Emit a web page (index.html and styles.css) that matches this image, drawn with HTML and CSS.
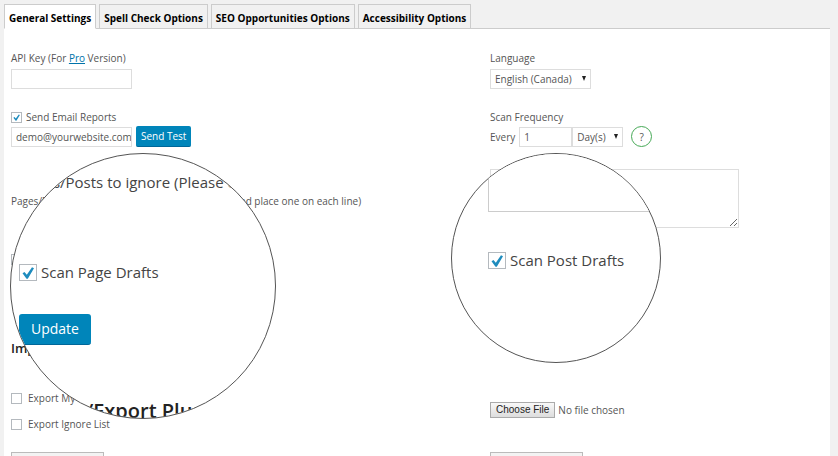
FILE: index.html
```
<!DOCTYPE html>
<html lang="en">
<head>
<meta charset="utf-8">
<title>General Settings</title>
<link rel="stylesheet" href="styles.css">
</head>
<body>
<nav class="tabs">
  <button class="tab tab-active" type="button">General Settings</button>
  <button class="tab" type="button">Spell Check Options</button>
  <button class="tab" type="button">SEO Opportunities Options</button>
  <button class="tab" type="button">Accessibility Options</button>
</nav>
<main class="panel">
  <form class="settings">
    <div class="field">
      <label for="api">API Key (For <a href="#">Pro</a> Version)</label>
      <input class="box" id="api" type="text">
    </div>
    <div class="field">
      <label for="lang">Language</label>
      <span class="pick pick-lang"><select class="box" id="lang"><option>English (Canada)</option></select></span>
    </div>
    <div class="field field-tight">
      <label class="check"><input type="checkbox" checked> Send Email Reports</label>
      <div class="line">
        <input class="box box-email" type="text" value="demo@yourwebsite.com" aria-label="Email">
        <button class="primary" type="button">Send Test</button>
      </div>
    </div>
    <div class="field field-tight">
      <label for="every">Scan Frequency</label>
      <div class="line">
        <span>Every</span>
        <span class="join"><input class="box box-number" id="every" type="text" value="1"><span class="pick pick-unit"><select class="box" aria-label="Unit"><option>Day(s)</option></select></span></span>
        <button class="help" type="button">?</button>
      </div>
    </div>
    <label class="ignore-label" for="ignore">Pages/Posts to ignore (Please enter the full URL and place one on each line)</label>
    <textarea class="ignore" id="ignore"></textarea>
    <div class="check drafts"><input type="checkbox" aria-label="Scan drafts"></div>
  </form>
  <h2 class="subhead">Import</h2>
  <form class="transfer">
    <div class="exports">
      <label class="check"><input type="checkbox"> Export My</label>
      <label class="check"><input type="checkbox"> Export Ignore List</label>
    </div>
    <div class="file">
      <button class="choose" type="button">Choose File</button>
      <span>No file chosen</span>
    </div>
    <button class="action" type="button" aria-label="Export"></button>
    <button class="action" type="button" aria-label="Import"></button>
  </form>
</main>
<section class="lens lens-page">
  <p>Pages/Posts to ignore (Please enter</p>
  <label class="check"><input type="checkbox" checked> Scan Page Drafts</label>
  <button class="primary" type="button">Update</button>
  <h2>Import/Export Plugin</h2>
</section>
<section class="lens lens-post">
  <textarea aria-label="Ignored posts"></textarea>
  <label class="check"><input type="checkbox" checked> Scan Post Drafts</label>
</section>
</body>
</html>
```
FILE: styles.css
```
* { box-sizing: border-box; }

html { overflow: hidden; }

body {
  position: relative;
  margin: 0;
  padding: 4px 8px 0 4px;
  background: #f1f1f1;
  color: #555;
  font: 10px/16px "Open Sans", "Noto Sans", sans-serif;
}

input, select, textarea, button {
  margin: 0;
  color: inherit;
  font: inherit;
}

a { color: #0073aa; }

.tabs {
  display: flex;
  gap: 3px;
  border-bottom: 1px solid #ccc;
}

.tab {
  height: 25px;
  margin-bottom: -1px;
  padding: 2px 4px 0;
  border: 1px solid #ccc;
  background: #f1f1f1;
  color: #000;
  font-weight: 700;
}

.tab-active {
  border-bottom-color: #fff;
  background: #fff;
}

.panel {
  padding: 21px 0 0 7px;
  background: #fff;
}

.settings, .transfer {
  display: grid;
  grid-template-columns: 479fr 340fr;
  row-gap: 20px;
}

.field {
  display: flex;
  flex-direction: column;
  align-items: flex-start;
  gap: 3px;
}

.field-tight {
  gap: 1px;
  padding-bottom: 2px;
}

.line, .join, .file {
  display: flex;
  align-items: center;
}

.line { gap: 4px; }

.box {
  width: 121px;
  height: 20px;
  padding: 0 4px;
  border: 1px solid #ddd;
  background: #fff;
}

.box-email { padding: 0 0 0 4px; }

.box-number { width: 53px; }

.pick { position: relative; }

.pick select {
  display: block;
  width: 100%;
  appearance: none;
}

.pick::after {
  content: "";
  position: absolute;
  top: 7px;
  right: 5px;
  border: 2px solid transparent;
  border-top: 5px solid #222;
  border-bottom: 0;
}

.pick-lang { width: 101px; }
.pick-unit { width: 51px; }

.check {
  display: flex;
  align-items: center;
  gap: 4px;
}

.check input {
  width: 11px;
  height: 11px;
  border: 1px solid #b4b9be;
  background: #fff;
  appearance: none;
}

.check input:checked {
  background: #fff url("data:image/svg+xml,%3Csvg xmlns='http://www.w3.org/2000/svg' viewBox='0 0 16 16'%3E%3Cpath d='M2.5 8.5l2-1.3 2.3 2.7L12 2.8l2 .9-6.2 10.1H6.5z' fill='%231e8cbe'/%3E%3C/svg%3E") center / 100% no-repeat;
}

.primary {
  height: 21px;
  padding: 0 5px;
  border: 0;
  border-bottom: 1px solid #006799;
  border-radius: 2px;
  background: #0085ba;
  color: #fff;
  line-height: 18px;
}

.help {
  width: 21px;
  height: 21px;
  margin-left: 4px;
  padding: 0;
  border: 1px solid #46a956;
  border-radius: 50%;
  background: #fff;
}

.ignore-label {
  align-self: center;
  padding-top: 4px;
}

.ignore {
  width: 249px;
  height: 59px;
  border: 1px solid #ddd;
  background: #fff;
}

.drafts { height: 22px; }

.subhead {
  margin: 70px 0 34px;
  color: #222;
  font-size: 13px;
  font-weight: 600;
  line-height: 16px;
}

.exports {
  display: grid;
  gap: 10px;
}

.exports .check { gap: 6px; }

.file {
  align-self: center;
  gap: 3px;
  padding-bottom: 2px;
}

.choose {
  height: 16px;
  padding: 0 5px;
  border: 1px solid #aaa;
  background: linear-gradient(#f8f8f8, #ddd);
  color: #222;
  font-family: "Liberation Sans", sans-serif;
  line-height: 14px;
}

.action {
  width: 93px;
  height: 20px;
  border: 1px solid #bbb;
  background: #f3f3f3;
}

.lens {
  position: absolute;
  top: 153px;
  overflow: hidden;
  border: 1px solid #555;
  border-radius: 50%;
  background: #fff;
  color: #444;
  font-size: 15px;
  line-height: 20px;
}

.lens .check input {
  width: 18px;
  height: 17px;
}

.lens-page {
  left: 10px;
  width: 266px;
  height: 266px;
  padding: 18px 0 0 8px;
}

.lens-page p {
  margin: 0 0 70px;
  white-space: nowrap;
}

.lens-page .primary {
  height: 31px;
  margin: 32px 0 56px;
  padding: 0 12px;
  border-radius: 3px;
  font-size: 14px;
}

.lens-page h2 {
  margin: 0;
  color: #222;
  font-size: 20px;
  font-weight: 600;
  white-space: nowrap;
}

.lens-post {
  left: 451px;
  width: 210px;
  height: 210px;
  padding-left: 36px;
}

.lens-post textarea {
  display: block;
  width: 100%;
  height: 58px;
  margin-bottom: 38px;
  border: 1px solid #ccc;
  border-width: 0 0 1px 1px;
  resize: none;
}
```
